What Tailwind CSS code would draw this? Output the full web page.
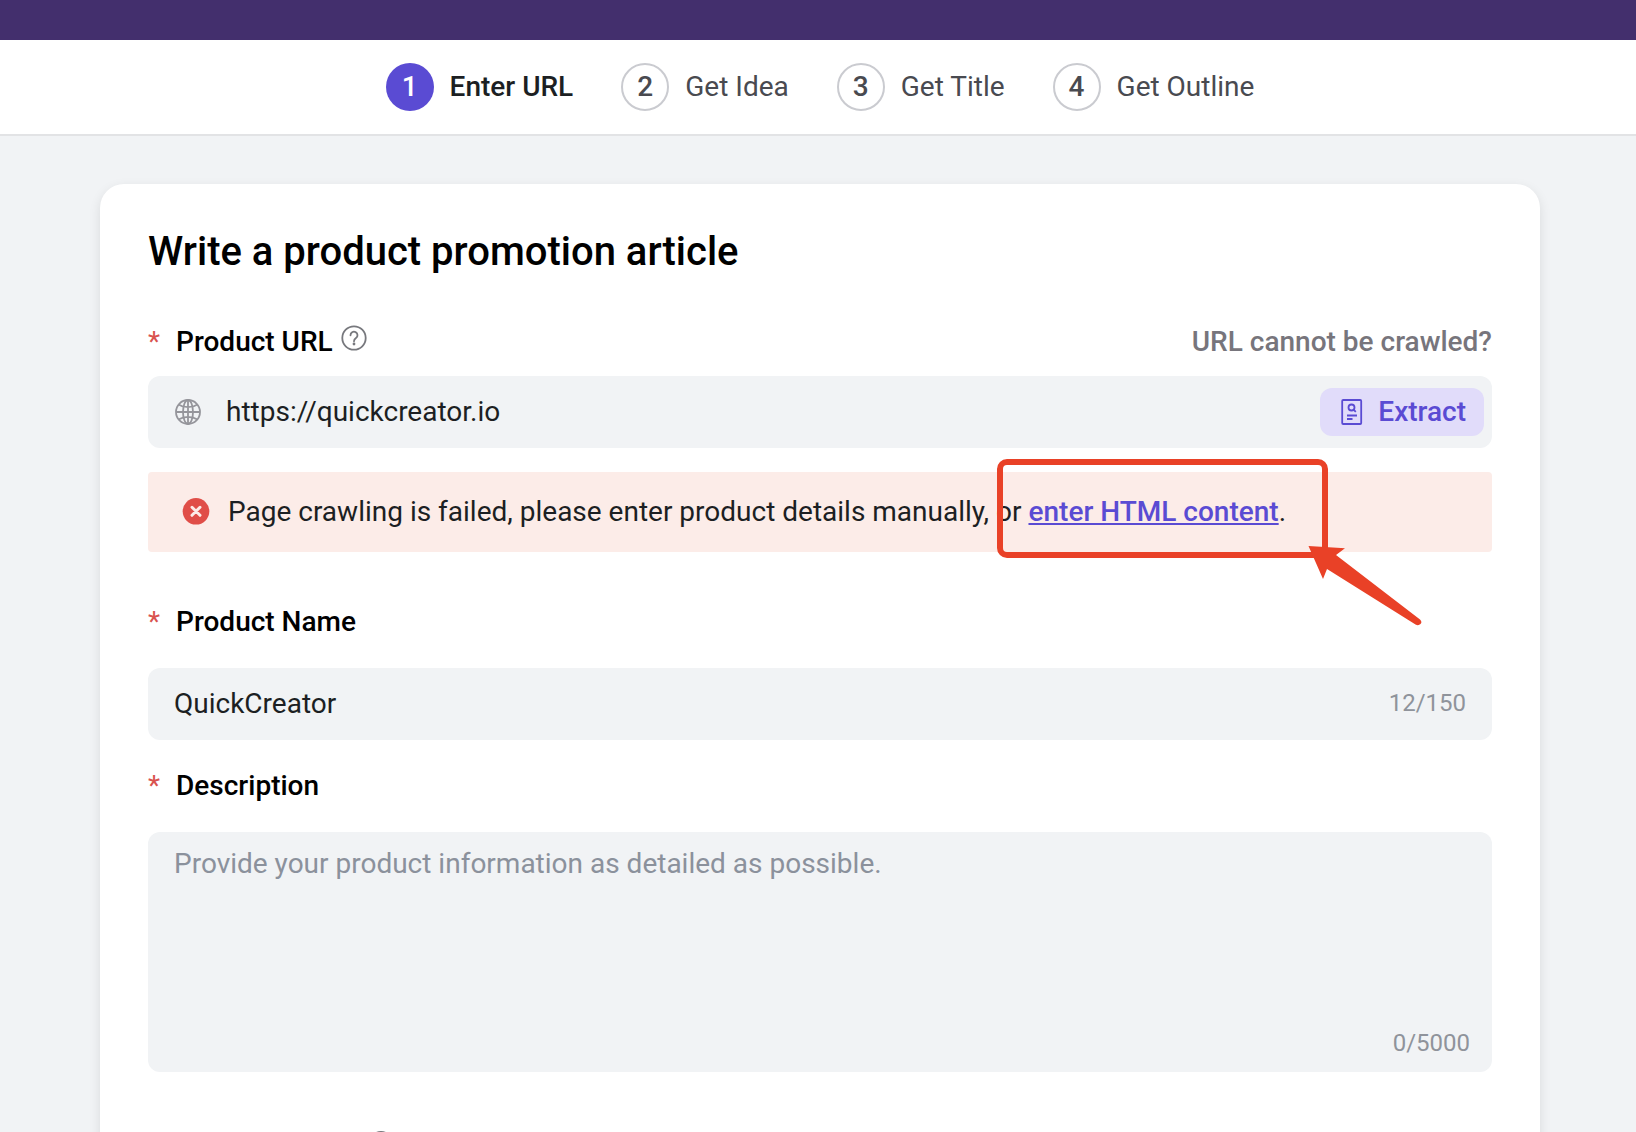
<!DOCTYPE html>
<html lang="en">
<head>
<meta charset="utf-8">
<meta name="viewport" content="width=device-width, initial-scale=1">
<title>Write a product promotion article</title>
<script src="https://cdn.jsdelivr.net/npm/@tailwindcss/browser@4"></script>
</head>
<body class="flex h-screen flex-col overflow-hidden bg-[#f1f3f5] font-[Roboto,sans-serif] text-[28px] leading-10 text-[#1c1f23]">
  <div class="h-10 shrink-0 bg-[#432f6d]"></div>
  <header class="shrink-0 border-b-2 border-[#e2e3e5] bg-white py-[23px] pl-1">
    <ol class="flex items-center justify-center gap-12 text-[#494a50]">
      <li class="flex items-center gap-4 font-medium text-[#1c1f23]" aria-current="step">
        <span class="flex size-12 items-center justify-center rounded-full bg-[#5a4bd3] text-white">1</span>Enter URL
      </li>
      <li class="flex items-center gap-4">
        <span class="flex size-12 items-center justify-center rounded-full border-2 border-[#cacbd0] font-medium">2</span>Get Idea
      </li>
      <li class="flex items-center gap-4">
        <span class="flex size-12 items-center justify-center rounded-full border-2 border-[#cacbd0] font-medium">3</span>Get Title
      </li>
      <li class="flex items-center gap-4">
        <span class="flex size-12 items-center justify-center rounded-full border-2 border-[#cacbd0] font-medium">4</span>Get Outline
      </li>
    </ol>
  </header>

  <main class="mt-12 mr-24 ml-[100px] shrink-0 grow rounded-t-3xl bg-white px-12 pt-11 shadow-[0_4px_12px_rgba(0,0,0,0.1)]">
    <h1 class="text-[40px] leading-12 font-medium text-black">Write a product promotion article</h1>

    <form>
      <div class="mt-[46px] flex items-center justify-between font-medium">
        <div class="flex items-center">
          <label for="url" class="flex gap-4 text-black"><span class="font-normal text-[#d9534f]">*</span>Product URL</label>
          <button type="button" aria-label="About the product URL" class="mb-2 ml-2">
            <svg class="size-[26px]" viewBox="0 0 26 26" fill="none" stroke="#77787d" stroke-width="1.8">
              <circle cx="13" cy="13" r="11.7"/>
              <path d="M9.5 10.3a3.5 3.5 0 1 1 5.5 2.8c-1.3.9-2 1.5-2 3.2" stroke-linecap="round"/>
              <circle cx="13" cy="19" r="1.4" fill="#77787d" stroke="none"/>
            </svg>
          </button>
        </div>
        <a href="#" class="text-[#77757c]">URL cannot be crawled?</a>
      </div>

      <div class="mt-[14px] flex h-[72px] items-center rounded-xl bg-[#f1f3f5] pr-2 pl-[26px]">
        <svg class="size-[28px] shrink-0" viewBox="0 0 28 28" fill="none" stroke="#95959b" stroke-width="1.8">
          <circle cx="14" cy="14" r="12"/>
          <ellipse cx="14" cy="14" rx="5" ry="12"/>
          <path d="M2 14h24M14 2v24M4.5 6.5c5.5 3.6 13.5 3.6 19 0M4.500 21.500c5.500-3.600 13.500-3.600 19 0"/>
        </svg>
        <input id="url" type="url" value="https://quickcreator.io" class="ml-6 min-w-0 flex-1 bg-transparent outline-none">
        <button type="button" class="flex h-12 items-center gap-[14px] rounded-xl bg-[#e1dcfa] pr-[18px] pl-5 font-medium text-[#5a4bd3]">
          <svg class="h-[28px] w-[24px]" viewBox="0 0 24 28" fill="none" stroke="#5a4bd3" stroke-width="1.8">
            <rect x="2.2" y="2" width="19" height="24" rx="1"/>
            <circle cx="11.5" cy="9.5" r="3"/>
            <path d="M13.6 11.6l2.2 2.2M7 17.5h10M7 21h5.5"/>
          </svg>
          Extract
        </button>
      </div>

      <div role="alert" class="relative mt-6 flex h-20 items-center gap-[18px] rounded bg-[#fcece8] pl-[34px]">
        <svg class="size-[28px] shrink-0" viewBox="0 0 28 28">
          <circle cx="14" cy="13.3" r="13.3" fill="#e04e48"/>
          <path d="M10 9.300l8 8M18 9.300l-8 8" stroke="#fcece8" stroke-width="3" stroke-linecap="round"/>
        </svg>
        <p class="whitespace-nowrap">Page crawling is failed, please enter product details manually, or <a href="#" class="font-medium text-[#5a4bd3] underline decoration-2 underline-offset-2">enter HTML content</a>.</p>
        <div class="absolute -top-[13px] left-[849px] h-[99px] w-[331px] rounded-[10px] border-6 border-[#e94127]"></div>
        <svg class="absolute top-[73px] left-[1159px] h-[82px] w-[118px]" viewBox="0 0 118 82" fill="#e94127">
          <path d="M1.500 1L38 3.300 29 10 113 74.500Q115.500 77 113.500 79T108.500 79.500L20 24 16 34Z"/>
        </svg>
      </div>

      <label for="name" class="mt-[50px] flex gap-4 font-medium text-black"><span class="font-normal text-[#d9534f]">*</span>Product Name</label>
      <div class="mt-[26px] flex h-[72px] items-center rounded-xl bg-[#f1f3f5] px-[26px]">
        <input id="name" type="text" value="QuickCreator" class="min-w-0 flex-1 bg-transparent outline-none">
        <span class="pb-0.5 text-2xl text-[#8f939b]">12/150</span>
      </div>

      <label for="description" class="mt-[26px] flex gap-4 font-medium text-black"><span class="font-normal text-[#d9534f]">*</span>Description</label>
      <div class="relative mt-[26px] flex">
        <textarea id="description" placeholder="Provide your product information as detailed as possible." class="h-60 w-full resize-none rounded-xl bg-[#f1f3f5] px-[26px] py-3 outline-none placeholder:text-[#8b919c]"></textarea>
        <span class="absolute right-[22px] bottom-[13px] text-2xl text-[#8f939b]">0/5000</span>
      </div>

      <div class="mt-[59px] flex pl-[220px]">
        <button type="button" aria-label="Help">
          <svg class="size-[26px]" viewBox="0 0 26 26" fill="none" stroke="#77787d" stroke-width="1.8">
            <circle cx="13" cy="13" r="12"/>
            <path d="M9.5 10.3a3.5 3.500 0 1 1 5.500 2.800c-1.300.9-2 1.500-2 3.200" stroke-linecap="round"/>
            <circle cx="13" cy="19" r="1.4" fill="#77787d" stroke="none"/>
          </svg>
        </button>
      </div>
    </form>
  </main>
</body>
</html>
